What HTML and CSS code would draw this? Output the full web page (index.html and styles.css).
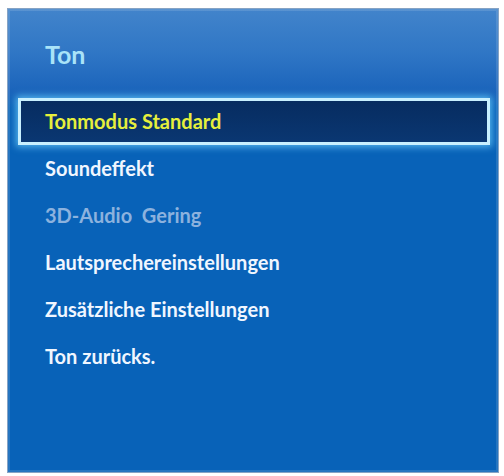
FILE: index.html
```html
<!DOCTYPE html>
<html lang="de">
<head>
<meta charset="UTF-8" />
<meta name="viewport" content="width=device-width, initial-scale=1" />
<title>Ton</title>
<link rel="stylesheet" href="styles.css">
</head>
<body>
<div class="panel">
  <h1 class="panel-title">Ton</h1>
  <ul class="menu">
    <li class="menu-item selected">Tonmodus Standard</li>
    <li class="menu-item">Soundeffekt</li>
    <li class="menu-item disabled">3D-Audio&nbsp; Gering</li>
    <li class="menu-item">Lautsprechereinstellungen</li>
    <li class="menu-item">Zusätzliche Einstellungen</li>
    <li class="menu-item">Ton zurücks.</li>
  </ul>
</div>
</body>
</html>
```

FILE: styles.css
```css
:root {
  --panel-blue: #0862b8;
  --title-color: #a9e3f8;
  --item-color: #f0f6ff;
  --disabled-color: #8cb2de;
  --focus-color: #e6ef3c;
}
body {
  margin: 0;
  background: #fff;
  font-family: Lato, "Open Sans", sans-serif;
}
.panel {
  box-sizing: border-box;
  width: 492px;
  height: 465px;
  margin: 8px 0 0 7px;
  padding-top: 30px;
  border: 1px solid #86a3c4;
  box-shadow: inset 0 0 0 2px rgba(255,255,255,0.12);
  background: linear-gradient(#4284cb 0, #2f76c5 45px, #1b64bb 82px, var(--panel-blue) 100px, var(--panel-blue) 100%);
}
.panel-title {
  margin: 0 0 29px 37px;
  font-size: 25px;
  line-height: 30px;
  font-weight: 700;
  color: var(--title-color);
}
.menu {
  list-style: none;
  margin: 0 8px 0 10px;
  padding: 0;
}
.menu-item {
  box-sizing: border-box;
  height: 47px;
  line-height: 41px;
  padding-left: 24px;
  border: 3px solid transparent;
  font-size: 20px;
  font-weight: 700;
  color: var(--item-color);
}
.menu-item.selected {
  color: var(--focus-color);
  border-color: #c8f0ff;
  background: linear-gradient(#072c60, #0a3772);
  box-shadow: 0 0 7px 2px rgba(110,210,255,0.75);
}
.menu-item.disabled {
  color: var(--disabled-color);
}
```
